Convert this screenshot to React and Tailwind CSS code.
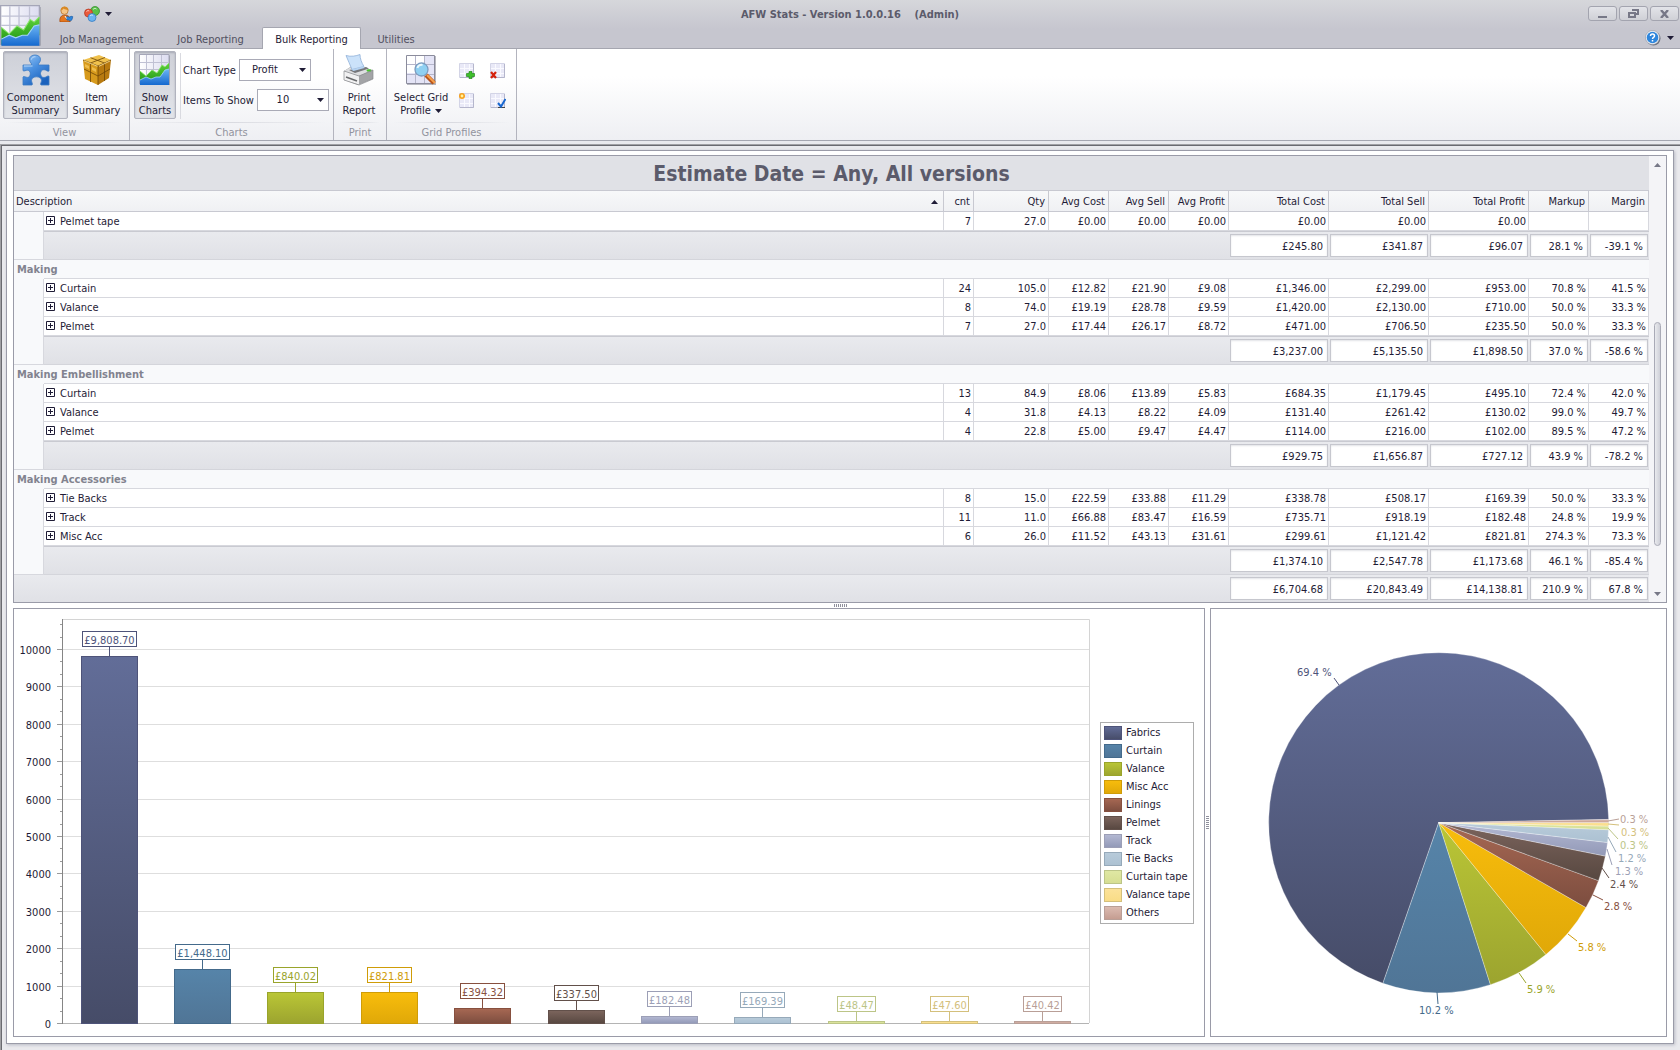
import clsx from "clsx";

// =========================
// GRID DATA
// =========================
const columns = [
  { title: "cnt", width: "w-[30px]" },
  { title: "Qty", width: "w-[75px]" },
  { title: "Avg Cost", width: "w-[60px]" },
  { title: "Avg Sell", width: "w-[60px]" },
  { title: "Avg Profit", width: "w-[60px]" },
  { title: "Total Cost", width: "w-[100px]" },
  { title: "Total Sell", width: "w-[100px]" },
  { title: "Total Profit", width: "w-[100px]" },
  { title: "Markup", width: "w-[60px]" },
  { title: "Margin", width: "w-[60px]" },
];

const groups = [
  {
    title: "",
    rows: [
      ["Pelmet tape", "7", "27.0", "£0.00", "£0.00", "£0.00", "£0.00", "£0.00", "£0.00", "", ""],
    ],
    totals: ["£245.80", "£341.87", "£96.07", "28.1 %", "-39.1 %"],
  },
  {
    title: "Making",
    rows: [
      ["Curtain", "24", "105.0", "£12.82", "£21.90", "£9.08", "£1,346.00", "£2,299.00", "£953.00", "70.8 %", "41.5 %"],
      ["Valance", "8", "74.0", "£19.19", "£28.78", "£9.59", "£1,420.00", "£2,130.00", "£710.00", "50.0 %", "33.3 %"],
      ["Pelmet", "7", "27.0", "£17.44", "£26.17", "£8.72", "£471.00", "£706.50", "£235.50", "50.0 %", "33.3 %"],
    ],
    totals: ["£3,237.00", "£5,135.50", "£1,898.50", "37.0 %", "-58.6 %"],
  },
  {
    title: "Making Embellishment",
    rows: [
      ["Curtain", "13", "84.9", "£8.06", "£13.89", "£5.83", "£684.35", "£1,179.45", "£495.10", "72.4 %", "42.0 %"],
      ["Valance", "4", "31.8", "£4.13", "£8.22", "£4.09", "£131.40", "£261.42", "£130.02", "99.0 %", "49.7 %"],
      ["Pelmet", "4", "22.8", "£5.00", "£9.47", "£4.47", "£114.00", "£216.00", "£102.00", "89.5 %", "47.2 %"],
    ],
    totals: ["£929.75", "£1,656.87", "£727.12", "43.9 %", "-78.2 %"],
  },
  {
    title: "Making Accessories",
    rows: [
      ["Tie Backs", "8", "15.0", "£22.59", "£33.88", "£11.29", "£338.78", "£508.17", "£169.39", "50.0 %", "33.3 %"],
      ["Track", "11", "11.0", "£66.88", "£83.47", "£16.59", "£735.71", "£918.19", "£182.48", "24.8 %", "19.9 %"],
      ["Misc Acc", "6", "26.0", "£11.52", "£43.13", "£31.61", "£299.61", "£1,121.42", "£821.81", "274.3 %", "73.3 %"],
    ],
    totals: ["£1,374.10", "£2,547.78", "£1,173.68", "46.1 %", "-85.4 %"],
  },
];

const grandTotals = ["£6,704.68", "£20,843.49", "£14,138.81", "210.9 %", "67.8 %"];

// =========================
// CHART DATA
// pie: label x, label y, leader line from / to
// =========================
const series = [
  { name: "Fabrics", value: 9808.7, label: "£9,808.70", top: "#626d98", bottom: "#464c68", line: "#4e5379", share: "69.4 %", pie: [86, 63, 128, 76, 123, 69] },
  { name: "Curtain", value: 1448.1, label: "£1,448.10", top: "#5684a9", bottom: "#507596", line: "#446a8b", share: "10.2 %", pie: [208, 401, 226, 383, 227, 395] },
  { name: "Valance", value: 840.02, label: "£840.02", top: "#bac636", bottom: "#9ca42f", line: "#99a42b", share: "5.9 %", pie: [316, 380, 308, 364, 315, 374] },
  { name: "Misc Acc", value: 821.81, label: "£821.81", top: "#f8bd0c", bottom: "#e0a808", line: "#cf9c08", share: "5.8 %", pie: [367, 338, 357, 325, 366, 332] },
  { name: "Linings", value: 394.32, label: "£394.32", top: "#a76853", bottom: "#7c4d3f", line: "#87503f", share: "2.8 %", pie: [393, 297, 382, 286, 392, 291] },
  { name: "Pelmet", value: 337.5, label: "£337.50", top: "#7c655d", bottom: "#574740", line: "#62504a", share: "2.4 %", pie: [399, 275, 391, 259, 398, 269] },
  { name: "Track", value: 182.48, label: "£182.48", top: "#b4b9d3", bottom: "#9299b7", line: "#9c9fb6", share: "1.3 %", pie: [404, 262, 396, 240, 401, 256] },
  { name: "Tie Backs", value: 169.39, label: "£169.39", top: "#b8cbda", bottom: "#acc1d2", line: "#96a9b9", share: "1.2 %", pie: [407, 249, 397, 228, 405, 243] },
  { name: "Curtain tape", value: 48.47, label: "£48.47", top: "#e0e8a4", bottom: "#d6de92", line: "#bcc587", share: "0.3 %", pie: [409, 236, 397, 219, 407, 230] },
  { name: "Valance tape", value: 47.6, label: "£47.60", top: "#fce29a", bottom: "#f9dc86", line: "#d4c07c", share: "0.3 %", pie: [410, 223, 397, 215, 408, 216] },
  { name: "Others", value: 40.42, label: "£40.42", top: "#dcbcb2", bottom: "#c49c90", line: "#b99f97", share: "0.3 %", pie: [409, 210, 397, 212, 408, 210] },
];

// =========================
// ICONS
// =========================
function Caret({ className }) {
  return (
    <svg className={className} width="7" height="4" viewBox="0 0 7 4">
      <path d="M0 0h7L3.5 4z" fill="currentColor" />
    </svg>
  );
}

function ChartIcon({ size, id }) {
  return (
    <svg width={size} height={size} viewBox="0 0 32 32">
      <defs>
        <linearGradient id={`${id}-g`} x1="0" y1="0" x2="0" y2="1">
          <stop offset="0" stopColor="#5ed23c" />
          <stop offset="1" stopColor="#1f9312" />
        </linearGradient>
        <linearGradient id={`${id}-b`} x1="0" y1="0" x2="0" y2="1">
          <stop offset="0" stopColor="#6cb4f4" />
          <stop offset="1" stopColor="#1569cf" />
        </linearGradient>
        <linearGradient id={`${id}-w`} x1="0" y1="0" x2="1" y2="0">
          <stop offset="0" stopColor="#ffffff" />
          <stop offset="1" stopColor="#dcdcf0" />
        </linearGradient>
      </defs>
      <path d="M1.500 1.500h29.500v29.500h-29.500z" fill="#6f7380" opacity=".55" />
      <path d="M.5.5h29.500v29.500H.5z" fill={`url(#${id}-w)`} stroke="#a5a6b8" />
      <path d="M7.500 1v20M14.500 1v20M22.500 1v14M1 8.500h29M1 15.500h29" stroke="#c0c1d4" fill="none" />
      <path d="M1 17l6 5 6-6 5 3 5-8 3 2 4-4v14L18 25 1 30z" fill={`url(#${id}-g)`} />
      <path d="M1 17l6 5 6-6 5 3 5-8 3 2 4-4" fill="none" stroke="#8ae468" strokeWidth=".8" />
      <path d="M1 26l6-3 5 2 5-2 4 0 5-7 4-1v16H1z" fill={`url(#${id}-b)`} />
      <path d="M1 26l6-3 5 2 5-2 4 0 5-7 4-1" fill="none" stroke="#a5d4fb" strokeWidth=".8" />
    </svg>
  );
}

function PuzzleIcon() {
  return (
    <svg width="32" height="32" viewBox="0 0 32 32">
      <defs>
        <linearGradient id="puzzle" x1="0" y1="0" x2=".6" y2="1">
          <stop offset="0" stopColor="#9ac8f5" />
          <stop offset=".5" stopColor="#4a90e0" />
          <stop offset="1" stopColor="#1b62bd" />
        </linearGradient>
      </defs>
      <path
        d="M3 11h8.500C12.500 9.800 9.500 8.500 9.500 5.500 9.500 2.600 12 1 15 1s5.500 1.600 5.500 4.500c0 3-3 4.300-2 5.500H29v6c-1.500 1-2.800-1.300-5-1.300-2.200 0-3.500 1.700-3.500 3.800s1.300 4 3.500 4c2.200 0 3.500-2.300 5-1.300V31h-8c-1.200-1 .5-2.600.5-4.600 0-2.200-2.500-3.600-5-3.600s-5 1.400-5 3.600c0 2 1.700 3.600.5 4.600H3v-8c1-1.200 2.600.4 4.400.4 1.900 0 2.900-1.700 2.900-3.600s-1-3.600-2.900-3.600c-1.600 0-3.400 1.400-4.400.4z"
        fill="url(#puzzle)"
        stroke="#3a78c2"
        strokeWidth=".8"
      />
      <path d="M11.500 5.500c.3-2 2-3 4-2.700M4 12h8.500" stroke="#cfe6fc" fill="none" opacity=".8" />
    </svg>
  );
}

function BoxIcon() {
  return (
    <svg width="32" height="32" viewBox="0 0 32 32">
      <path d="M2 6L18 1l12 5-13 6z" fill="#f0c14c" />
      <path d="M2 6l15 6v19L4 25z" fill="#d79a1c" />
      <path d="M17 12l13-6-2 18-11 7z" fill="#b87a10" />
      <path d="M9.500 3.700L23.500 9M24 3.500L9.500 9v19M23.500 9v18M3 15l14 7 12-7M17 12v19M2 6l15 6 13-6" fill="none" stroke="#6e4606" strokeWidth=".8" />
      <path d="M3 6.800l13.500 5.500M18 12.300L29 7" fill="none" stroke="#fbe29a" strokeWidth=".8" />
      <path d="M4 10l4 2v3l-4-2zM11 13l4 2v3l-4-2z" fill="#efbd4c" />
    </svg>
  );
}

function PrinterIcon() {
  return (
    <svg width="32" height="32" viewBox="0 0 32 32">
      <path d="M1 17l8-5 21 4v9L15 31 1 26z" fill="#9a9b9d" />
      <path d="M1 17l9-5 20 4-14 6z" fill="#dddee0" />
      <path d="M1 17l15 5v8.500L1 26z" fill="#f1f1f2" />
      <path d="M16 22l14-6v8l-14 6.500z" fill="#a3a4a7" />
      <path d="M3 1.500c5 1.500 10 .5 14-1 0 4 1.500 8 4 12L9 15.500C7 11 5 6 3 1.500z" fill="#cbe2fa" stroke="#8fb0d8" strokeWidth=".8" />
      <path d="M6 16l17-3 3 1.500L12 19z" fill="#76777b" />
      <path d="M8 15.500l12.500-3 1 1.500-11 3z" fill="#b5d3f3" />
      <path d="M3 23l11 4" stroke="#6a6b6e" strokeWidth="1.500" />
      <ellipse cx="26" cy="16.500" rx="2.500" ry="1.300" fill="#46c42e" />
      <path d="M1 17l15 5 14-6v9l-14 6L1 26z" fill="none" stroke="#8b8c90" strokeWidth=".7" />
    </svg>
  );
}

function GridSearchIcon() {
  return (
    <svg width="32" height="32" viewBox="0 0 32 32">
      <path d="M2 2h29v29H2z" fill="#8a8b98" opacity=".6" />
      <path d="M1.500 1.500h28v28h-28z" fill="#e4e4f6" stroke="#8b8c9c" />
      <path d="M2 2h8v8H2zM11 2h8v8h-8zM2 11h8v8H2z" fill="#ffffff" />
      <path d="M10.500 2v27M19.500 2v27M2 10.500h27M2 20.500h27" stroke="#b4b5ca" />
      <path d="M21 21l8 8" stroke="#b8541a" strokeWidth="4.500" />
      <path d="M22 21l8 8" stroke="#f7a04c" strokeWidth="2" />
      <circle cx="16.500" cy="15.500" r="6.500" fill="#8fd0f2" stroke="#7c9cc0" strokeWidth="1.300" />
      <path d="M12.500 14c.5-2.500 2.500-3.500 5-3" stroke="#e9f8ff" strokeWidth="2" fill="none" />
    </svg>
  );
}

function MiniGrid({ children }) {
  return (
    <svg width="16" height="16" viewBox="0 0 16 16">
      <path d="M.5.5h14v14H.5z" fill="#e9e9f7" stroke="#d3d4e6" />
      <path d="M5.500 1v13M10.500 1v13M1 5.500h13M1 10.500h13" stroke="#fafaff" />
      <path d="M14.500 1v13.500H1" stroke="#b5b6cc" fill="none" />
      {children}
    </svg>
  );
}

function UserIcon() {
  return (
    <svg width="16" height="16" viewBox="0 0 16 16">
      <path d="M2 16c-.8-4 1-7 5-7s5.500 2.500 5 7z" fill="#e4761e" stroke="#9c4510" strokeWidth=".7" />
      <circle cx="6.500" cy="4.800" r="3.600" fill="#f6c586" stroke="#b06a24" strokeWidth=".7" />
      <path d="M2.600 4.500C2.600 1.500 5 .3 7 .5s3.800 1.800 3.500 4C9 3.800 7 3.500 5.500 2.500 5 3.500 4 4.200 2.600 4.500z" fill="#d98a26" />
      <path d="M8 11.500c1-1.500 2.500-1 3.200 0 1-1.200 2.600-1.500 3.600-.8l-.8 3c-1 1.400-2.600 1.600-3.400.3-1 .6-2.300 0-2.600-2.500z" fill="#2f86dc" stroke="#15549c" strokeWidth=".6" />
      <path d="M7 10l1.500 2.500" stroke="#fff" />
    </svg>
  );
}

function BallsIcon() {
  return (
    <svg width="16" height="16" viewBox="0 0 16 16">
      <circle cx="11" cy="5" r="4.500" fill="#59c04a" stroke="#2f8a28" strokeWidth=".7" />
      <circle cx="4.500" cy="7" r="4" fill="#ea5a3c" stroke="#b0341c" strokeWidth=".7" />
      <circle cx="8" cy="11.500" r="4" fill="#6cb4f0" stroke="#2c72bd" strokeWidth=".7" />
      <path d="M9 3.500c1-1.500 3-1.200 3.500-.5M2.500 5.500c.8-1 2-1 2.700-.5M6 10c.8-1.200 2.300-1.200 3-.5" stroke="#fff" opacity=".7" fill="none" />
    </svg>
  );
}

// =========================
// TITLE BAR
// =========================
const tabs = [
  { title: "Job Management", width: "w-[115px]" },
  { title: "Job Reporting", width: "w-[103px]" },
  { title: "Bulk Reporting", width: "w-[99px]", active: true },
  { title: "Utilities", width: "w-[70px]" },
];

function WindowButton({ label, children }) {
  return (
    <button
      aria-label={label}
      className="flex h-[15px] w-[29px] items-center justify-center rounded-[3px] border border-[#a3a4af] bg-gradient-to-b from-[#e3e4e9] to-[#cfd0d6] text-[#777887]"
    >
      {children}
    </button>
  );
}

function TitleBar() {
  return (
    <header className="flex h-[49px] border-b border-[#a5a6b0] bg-gradient-to-b from-[#d6d7db] to-[#c6c6cf] to-60%">
      <button aria-label="Application menu" className="w-[44px] pt-1">
        <ChartIcon size={42} id="app" />
      </button>

      <div className="flex flex-1 flex-col">
        <div className="flex h-[27px]">
          <div className="flex items-center pl-[14px] text-[#1f1c36]">
            <button aria-label="User">
              <UserIcon />
            </button>
            <button aria-label="Skins" className="flex items-center pl-[10px]">
              <BallsIcon />
              <Caret className="ml-[5px]" />
            </button>
          </div>
          <h1 className="flex-1 whitespace-pre pt-[2px] text-center text-[11px] font-bold leading-[25px] text-[#5b5b6b]">
            {"AFW Stats - Version 1.0.0.16    (Admin)"}
          </h1>
          <div className="flex gap-[2px] pr-px pt-[6px]">
            <WindowButton label="Minimize">
              <svg width="9" height="9" viewBox="0 0 9 9">
                <path d="M0 7h9v2H0z" fill="currentColor" />
              </svg>
            </WindowButton>
            <WindowButton label="Restore">
              <svg width="11" height="9" viewBox="0 0 11 9">
                <path d="M4 1h6v4H7M1 4h6v4H1z" fill="none" stroke="currentColor" strokeWidth="2" />
              </svg>
            </WindowButton>
            <WindowButton label="Close">
              <svg width="9" height="8" viewBox="0 0 9 8">
                <path d="M1 0l7 8M8 0L1 8" stroke="currentColor" strokeWidth="2.400" />
              </svg>
            </WindowButton>
          </div>
        </div>

        <nav className="flex h-[22px] items-end">
          {tabs.map((tab) => (
            <button
              key={tab.title}
              className={clsx(
                "h-[22px] pt-[3px] text-center text-[11px] leading-[18px]",
                tab.width,
                tab.active
                  ? "rounded-t-[2px] border border-b-0 border-[#a5a6b0] bg-white text-[#1f1c36]"
                  : "border border-transparent text-[#504f60]"
              )}
            >
              {tab.title}
            </button>
          ))}
          <button aria-label="Help" className="ml-auto flex h-[22px] items-center gap-[6px] pr-[6px] text-[#1f1c36]">
            <svg width="16" height="16" viewBox="0 0 16 16">
              <circle cx="8.500" cy="8.500" r="7" fill="#6b707c" />
              <circle cx="7.500" cy="7.500" r="7" fill="#f5f7fa" stroke="#8b8f9c" strokeWidth=".6" />
              <circle cx="7.500" cy="7.500" r="5.800" fill="#2f86dc" />
              <path d="M5.500 6c0-2.600 4-2.600 4 0 0 1.600-2 1.300-2 3M7.500 10v1.500" stroke="#fff" strokeWidth="1.500" fill="none" />
            </svg>
            <Caret />
          </button>
        </nav>
      </div>
    </header>
  );
}

// =========================
// RIBBON
// =========================
function RibbonGroup({ title, className, children }) {
  return (
    <section className={clsx("flex flex-col border-r border-[#b3b4be]", className)}>
      <div className="flex h-[73px] pt-[2px]">{children}</div>
      <div className="mx-[6px] h-px bg-gradient-to-r from-transparent via-[#d9dae0] to-transparent" />
      <h2 className="pt-[3px] text-center text-[11px] leading-[14px] text-[#92939e]">{title}</h2>
    </section>
  );
}

function BigButton({ icon, lines, className, pressed, menu }) {
  return (
    <button
      aria-pressed={pressed}
      className={clsx(
        "flex h-[68px] flex-col items-center rounded-[2px] border pt-[2px] text-[11px] leading-[13px]",
        pressed
          ? "border-[#b1b3be] bg-gradient-to-b from-[#ced0d8] to-[#e2e4e9] shadow-[inset_0_1px_2px_#a9abb6]"
          : "border-transparent",
        className
      )}
    >
      {icon}
      <span className="mt-[5px] whitespace-nowrap">{lines[0]}</span>
      <span className="flex items-center gap-1 whitespace-nowrap">
        {lines[1]}
        {menu && <Caret />}
      </span>
    </button>
  );
}

function Combo({ id, label, value, options }) {
  return (
    <div className="flex items-center gap-[3px]">
      <label htmlFor={id} className="whitespace-nowrap pt-[2px]">
        {label}
      </label>
      <div className="relative">
        <select
          id={id}
          defaultValue={value}
          className="h-[22px] w-[72px] appearance-none border border-[#a9aab6] bg-white pr-5 pt-px text-center [text-align-last:center]"
        >
          {options.map((o) => (
            <option key={o}>{o}</option>
          ))}
        </select>
        <Caret className="pointer-events-none absolute right-[5px] top-[9px]" />
      </div>
    </div>
  );
}

function Ribbon() {
  return (
    <div className="flex h-[92px] border-b border-[#a5a6b0] bg-gradient-to-b from-white from-30% to-[#eeeff3]">
      <RibbonGroup title="View" className="w-[130px]">
        <BigButton pressed icon={<PuzzleIcon />} lines={["Component", "Summary"]} className="ml-[3px] w-[65px]" />
        <BigButton icon={<BoxIcon />} lines={["Item", "Summary"]} className="w-[57px]" />
      </RibbonGroup>

      <RibbonGroup title="Charts" className="w-[204px]">
        <BigButton pressed icon={<ChartIcon size={32} id="show" />} lines={["Show", "Charts"]} className="ml-1 w-[42px]" />
        <div className="ml-1 mt-[2px] h-[66px] w-px bg-[#d9dae0]" />
        <div className="ml-[2px] flex flex-col gap-2 pt-2 text-[11px]">
          <Combo id="chart-type" label="Chart Type" value="Profit" options={["Cost", "Sell", "Profit"]} />
          <Combo id="items-to-show" label="Items To Show" value="10" options={["5", "10", "20"]} />
        </div>
      </RibbonGroup>

      <RibbonGroup title="Print" className="w-[53px]">
        <BigButton icon={<PrinterIcon />} lines={["Print", "Report"]} className="w-[50px]" />
      </RibbonGroup>

      <RibbonGroup title="Grid Profiles" className="w-[130px]">
        <BigButton menu icon={<GridSearchIcon />} lines={["Select Grid", "Profile"]} className="w-[68px]" />
        <div className="ml-1 mt-3 grid h-[46px] grid-cols-[16px_16px] content-between gap-x-[15px]">
          <button aria-label="Add profile">
            <MiniGrid>
              <path d="M10 8.500h3v2h2.500v3H13v2h-3v-2H7.500v-3H10z" fill="#3fbf2c" stroke="#147a0a" strokeWidth=".6" />
            </MiniGrid>
          </button>
          <button aria-label="Delete profile">
            <MiniGrid>
              <path d="M1 9l5 6M6 9l-5 6" stroke="#d4220c" strokeWidth="2.200" />
            </MiniGrid>
          </button>
          <button aria-label="New profile">
            <MiniGrid>
              <circle cx="3" cy="3" r="3" fill="#f7a11c" />
              <circle cx="3" cy="3" r="1.400" fill="#fff4a0" />
            </MiniGrid>
          </button>
          <button aria-label="Apply profile">
            <MiniGrid>
              <path d="M8 14.500h7" stroke="#444" />
              <path d="M8 10l3 3.500L15.500 6" stroke="#1767d0" strokeWidth="2" fill="none" />
            </MiniGrid>
          </button>
        </div>
      </RibbonGroup>
    </div>
  );
}

// =========================
// SUMMARY GRID
// =========================
function TotalCell({ value, last }) {
  return (
    <td
      className={clsx(
        "bg-gradient-to-b from-[#e9eaee] to-[#e0e1e6] p-0 px-px",
        last ? "h-[27px]" : "h-[29px] border-b border-t border-b-[#d4d5db] border-t-[#c9cad1]"
      )}
    >
      <div className="h-[23px] border border-[#c6c7ce] bg-white pr-[4px] pt-[2px] text-right leading-[19px] shadow-[inset_0_1px_2px_#e2e3e7]">
        {value}
      </div>
    </td>
  );
}

function GroupRows({ group }) {
  return (
    <tbody>
      {group.title && (
        <tr className="h-[19px] bg-[#f8f9fb]">
          <th scope="rowgroup" className="whitespace-nowrap p-0 pl-[3px] text-left font-bold leading-[18px] text-[#82838f]">
            <div className="w-0">{group.title}</div>
          </th>
          <td colSpan={11} className="border-b border-[#d7d8de] p-0" />
        </tr>
      )}

      {group.rows.map((row) => (
        <tr key={row[0]} className="h-[19px] bg-white">
          <td className="border-r border-[#d7d8de] bg-[#f8f9fb] p-0" />
          <td className="border-b border-r border-[#d7d8de] p-0">
            <div className="flex h-[18px] items-start gap-[5px] pl-[2px]">
              <button aria-label={`Expand ${row[0]}`} className="flex h-[17px] items-center">
                <svg width="9" height="9" viewBox="0 0 9 9">
                  <path d="M.5.5h8v8h-8zM2 4.500h5M4.500 2v5" fill="none" stroke="#1f1c36" />
                </svg>
              </button>
              <span className="pt-[2px] leading-[16px]">{row[0]}</span>
            </div>
          </td>
          {row.slice(1).map((cell, i) => (
            <td key={i} className="border-b border-r border-[#d7d8de] p-0 pr-[2px] pt-[2px] text-right leading-[16px]">
              {cell}
            </td>
          ))}
        </tr>
      ))}

      <tr className="h-[29px]">
        <td className="border-b border-r border-[#d7d8de] bg-[#f8f9fb] p-0" />
        <td
          colSpan={6}
          className="border-b border-t border-b-[#d4d5db] border-t-[#c9cad1] bg-gradient-to-b from-[#e9eaee] to-[#e0e1e6] p-0"
        />
        {group.totals.map((t, i) => (
          <TotalCell key={i} value={t} />
        ))}
      </tr>
    </tbody>
  );
}

function SummaryGrid() {
  return (
    <div className="flex border border-[#9a9ba8] bg-white text-[11px]">
      <div className="flex-1">
        <h2 className="h-[34px] bg-[#e0e1e6] pt-[2px] text-center text-[21px] font-bold leading-[32px] text-[#5b5b6b]">
          Estimate Date = Any, All versions
        </h2>
        <table className="w-full table-fixed border-separate border-spacing-0">
          <colgroup>
            <col className="w-[30px]" />
            <col />
            {columns.map((c) => (
              <col key={c.title} className={c.width} />
            ))}
          </colgroup>
          <thead>
            <tr className="h-[22px] bg-gradient-to-b from-[#f8f9fa] to-[#eff0f3] leading-[16px]">
              <th colSpan={2} className="border border-l-0 border-[#c8c9d1] p-0 pt-[2px] font-normal">
                <div className="flex items-center justify-between pl-[2px] pr-[5px]">
                  Description
                  <svg width="7" height="4" viewBox="0 0 7 4">
                    <path d="M0 4h7L3.500 0z" fill="#1f1c36" />
                  </svg>
                </div>
              </th>
              {columns.map((c) => (
                <th key={c.title} className="whitespace-nowrap border-b border-r border-t border-[#c8c9d1] p-0 pr-[3px] pt-[2px] text-right font-normal">
                  {c.title}
                </th>
              ))}
            </tr>
          </thead>
          {groups.map((g) => (
            <GroupRows key={g.title} group={g} />
          ))}
          <tfoot>
            <tr className="h-[27px]">
              <td colSpan={7} className="bg-gradient-to-b from-[#e9eaee] to-[#e0e1e6] p-0" />
              {grandTotals.map((t, i) => (
                <TotalCell key={i} value={t} last />
              ))}
            </tr>
          </tfoot>
        </table>
      </div>

      {/* SCROLLBAR */}
      <div className="flex w-[17px] flex-col items-center bg-[#f4f4f7] text-[#777887]">
        <button aria-label="Scroll up" className="flex h-[17px] w-full items-center justify-center">
          <Caret className="rotate-180" />
        </button>
        <div className="grow-[150]" />
        <div className="w-[7px] grow-[223] rounded-full border border-[#a9aab6] bg-gradient-to-r from-[#e9eaee] to-[#cfd0d8]" />
        <div className="grow-[39]" />
        <button aria-label="Scroll down" className="flex h-[17px] w-full items-center justify-center">
          <Caret />
        </button>
      </div>
    </div>
  );
}

// =========================
// CHARTS
// =========================
function Gradients({ prefix }) {
  return (
    <defs>
      {series.map((s, i) => (
        <linearGradient key={s.name} id={`${prefix}${i}`} x1="0" y1="0" x2="0" y2="1">
          <stop offset="0" stopColor={s.top} />
          <stop offset="1" stopColor={s.bottom} />
        </linearGradient>
      ))}
    </defs>
  );
}

const AXIS_X = 48;
const AXIS_TOP = 10;
const AXIS_BOTTOM = 414;
const AXIS_RIGHT = 1075;
const STEP = 37.4;

// snap to the middle of a pixel so that the lines stay crisp
const snap = (n) => Math.round(n) + 0.5;

function BarChart() {
  const pitch = (AXIS_RIGHT - AXIS_X) / series.length;
  const thousands = Array.from({ length: 11 }, (_, i) => i);
  const minors = Array.from({ length: 32 }, (_, i) => i + 1).filter((i) => i % 3 !== 0);

  return (
    <svg className="min-w-0 flex-1" viewBox="0 0 1086 427" role="img" aria-label="Profit by item">
      <Gradients prefix="bar" />

      {/* PLOT AREA */}
      {thousands.map((t) => {
        const y = snap(AXIS_BOTTOM - t * STEP);
        return (
          <g key={t}>
            <path d={`M${AXIS_X} ${y}H${AXIS_RIGHT}`} stroke={t ? "#dedede" : "#b4b4b4"} />
            <path d={`M${AXIS_X - 5} ${y}h5`} stroke="#9a9a9a" />
            <text x={AXIS_X - 11} y={y + 4} textAnchor="end" fontSize="11" fill="#1f1c36">
              {t * 1000}
            </text>
          </g>
        );
      })}
      {minors.map((m) => (
        <path key={m} d={`M${AXIS_X - 2} ${snap(AXIS_BOTTOM - (m * STEP) / 3)}h2`} stroke="#9a9a9a" />
      ))}
      <path d={`M${AXIS_X} ${AXIS_TOP + 0.5}H${AXIS_RIGHT + 0.5}V${AXIS_BOTTOM}`} fill="none" stroke="#d4d4d4" />
      <path d={`M${AXIS_X + 0.5} ${AXIS_TOP}V${AXIS_BOTTOM + 1}`} stroke="#858585" />

      {/* BARS */}
      {series.map((s, i) => {
        const center = snap(AXIS_X + pitch * (i + 0.5));
        const top = snap(AXIS_BOTTOM - Math.max((s.value * STEP) / 1000, 2));
        const w = s.label.length === 9 ? 54 : s.label.length === 7 ? 44 : 38;
        return (
          <g key={s.name}>
            <rect x={center - 28} y={top} width="56" height={AXIS_BOTTOM + 0.5 - top} fill={`url(#bar${i})`} stroke={s.line} />
            <path d={`M${center} ${top}v-10`} stroke={s.line} />
            <rect x={center - w / 2} y={top - 25} width={w} height="15" fill="#ffffff" stroke={s.line} />
            <text x={center} y={top - 13} textAnchor="middle" fontSize="11" fill={s.line}>
              {s.label}
            </text>
          </g>
        );
      })}
    </svg>
  );
}

function Legend() {
  return (
    <ul className="mr-[10px] flex w-[94px] flex-col gap-1 self-center border border-[#adadad] bg-white p-[3px] text-[11px] leading-[14px]">
      {series.map((s, i) => (
        <li key={s.name} className="flex gap-1 whitespace-nowrap">
          <svg width="18" height="14" viewBox="0 0 18 14" className="shrink-0">
            <rect x=".5" y=".5" width="17" height="13" fill={`url(#bar${i})`} stroke={s.line} />
          </svg>
          {s.name}
        </li>
      ))}
    </ul>
  );
}

const PIE = { cx: 227.7, cy: 213.7, r: 170 };

function slicePath(from, to) {
  const point = (deg) => {
    const rad = (deg * Math.PI) / 180;
    return `${PIE.cx + PIE.r * Math.cos(rad)} ${PIE.cy + PIE.r * Math.sin(rad)}`;
  };
  const large = from - to > 180 ? 1 : 0;
  return `M${PIE.cx} ${PIE.cy}L${point(from)}A${PIE.r} ${PIE.r} 0 ${large} 0 ${point(to)}Z`;
}

function PieChart() {
  const total = series.reduce((sum, s) => sum + s.value, 0);
  let angle = -1.1;
  const slices = series.map((s) => {
    const from = angle;
    angle -= (s.value / total) * 360;
    return slicePath(from, angle);
  });

  return (
    <svg className="w-full" viewBox="0 0 455 427" role="img" aria-label="Profit share by item">
      <Gradients prefix="pie" />
      {slices.map((d, i) => (
        <path key={i} d={d} fill={`url(#pie${i})`} stroke="#ffffff" strokeOpacity=".5" strokeWidth=".6" />
      ))}
      {series.map((s) => {
        const [x, y, x1, y1, x2, y2] = s.pie;
        return (
          <g key={s.name}>
            <path d={`M${x1} ${y1}L${x2} ${y2}`} stroke={s.line} />
            <text x={x} y={y + 4} fontSize="11" fill={s.line}>
              {s.share}
            </text>
          </g>
        );
      })}
    </svg>
  );
}

// =========================
// APP
// =========================
export default function App() {
  return (
    <div className="flex min-h-screen flex-col bg-[#e9e9ed] text-[#1f1c36] [font-family:'DejaVu_Sans_Condensed','DejaVu_Sans',sans-serif]">
      <TitleBar />
      <Ribbon />

      <main className="mt-[3px] flex flex-1 flex-col border-l border-t border-[#a0a0a4]">
        <div className="flex flex-1 flex-col border-l border-t border-[#6a6a70] pb-[6px] pl-1 pr-[6px] pt-1">
          <div className="flex flex-1 flex-col border border-[#9a9ba8] bg-white px-[6px] pb-[6px] pt-1 shadow-[1px_1px_3px_#b9bac4]">
            <SummaryGrid />

            {/* HORIZONTAL SPLITTER */}
            <div className="flex h-[5px] items-center justify-center">
              <div className="h-[3px] w-[13px] bg-[repeating-linear-gradient(90deg,#8f909c_0_1px,transparent_1px_2px)]" />
            </div>

            <div className="grid flex-1 grid-cols-[1192fr_5px_457fr]">
              <div className="flex items-center border border-[#9a9ba8]">
                <BarChart />
                <Legend />
              </div>

              {/* VERTICAL SPLITTER */}
              <div className="flex items-center justify-center">
                <div className="h-[13px] w-[3px] bg-[repeating-linear-gradient(180deg,#8f909c_0_1px,transparent_1px_2px)]" />
              </div>

              <div className="flex items-center border border-[#9a9ba8]">
                <PieChart />
              </div>
            </div>
          </div>
        </div>
      </main>
    </div>
  );
}
